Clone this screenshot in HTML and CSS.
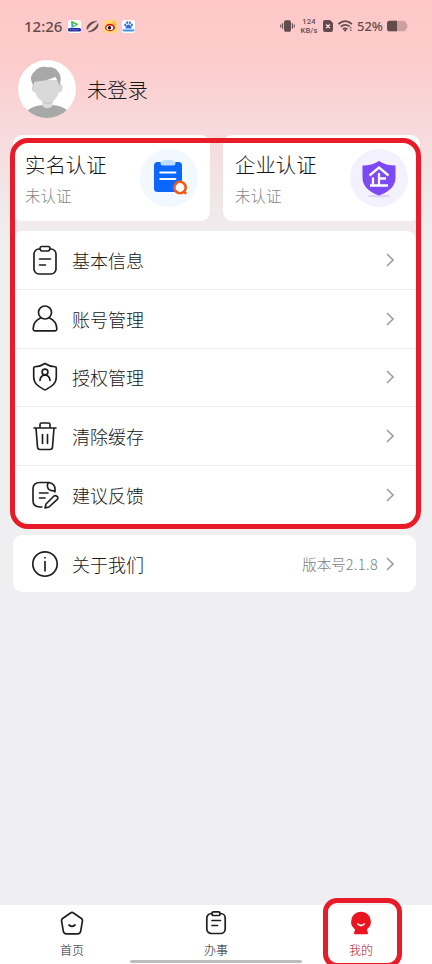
FILE: index.html
```html
<!DOCTYPE html>
<html lang="zh-CN">
<head>
<meta charset="utf-8">
<title>我的</title>
<link rel="stylesheet" href="styles.css">
</head>
<body>
<div class="screen">
  <header class="status">
    <span class="time">12:26</span>
    <svg class="app" viewBox="0 0 13 13"><rect width="13" height="13" rx="2" fill="#fff"/><path d="M3 1 10 4.500 3.500 8Z" fill="#1daee8"/><path d="M3.500.7 10.500 4.300 6 7Z" fill="#58c322"/><path d="M5.500 3.500 8 4.700 5.500 6Z" fill="#fff"/><rect x="0" y="8" width="13" height="3.600" rx="1.500" fill="#2130a5"/><path d="M2 9.800h9" stroke="#8290df" stroke-dasharray="1 .7"/></svg>
    <svg class="app" viewBox="0 0 13 13"><path d="M1.300 9.500C-.5 6 4.500.8 10.800 1.200 6.500 3 3.500 5.500 1.300 9.500ZM11.900 3.500c1.500 4-4 8.800-9.700 8.300C6.500 10.300 10 7.500 11.900 3.500Z" fill="#634b4d" stroke="#634b4d" stroke-width=".5" stroke-linejoin="round"/></svg>
    <svg class="app" viewBox="0 0 13 13"><rect width="13" height="13" rx="2.500" fill="#ffd775"/><ellipse cx="6" cy="7.500" rx="5" ry="3.700" fill="#d51c1c"/><ellipse cx="5.800" cy="7.700" rx="3.400" ry="2.300" fill="#fff"/><circle cx="5.500" cy="7.800" r="1.700" fill="#161010"/><path d="M8.500 2c2-.5 3.300 1 2.800 3M8.500 3.800c1-.2 1.500.4 1.300 1.300" fill="none" stroke="#f29a22"/></svg>
    <svg class="app" viewBox="0 0 13 13"><rect width="13" height="13" rx="2.500" fill="#fff"/><g fill="#316de8"><ellipse cx="3.200" cy="5" rx="1" ry="1.400"/><ellipse cx="5.200" cy="2.700" rx="1" ry="1.400"/><ellipse cx="7.800" cy="2.700" rx="1" ry="1.400"/><ellipse cx="9.800" cy="5" rx="1" ry="1.400"/><path d="M6.500 4.500c1.500 0 3.500 2.500 3 4h-6c-.5-1.500 1.500-4 3-4Z"/></g><path d="M0 9.500h13l-1.500 2h-10Z" fill="#3e92ec"/></svg>
    <span class="grow"></span>
    <svg class="vibrate" viewBox="0 0 16 14"><rect x="4.300" y=".8" width="7.400" height="12.400" rx="2" fill="#634b4d"/><path d="M2.800 4v6M.8 5.500v3M13.200 4v6M15.200 5.500v3" stroke="#634b4d" stroke-width="1.200"/></svg>
    <span class="rate"><b>124</b><b>KB/s</b></span>
    <svg class="sim" viewBox="0 0 10 12"><path d="M2 0h5l3 3v7q0 2-2 2H2q-2 0-2-2V2Q0 0 2 0Z" fill="#634b4d"/><path d="m3.200 4.500 3.600 3.600m0-3.600L3.200 8.100" stroke="#ffe4e4" stroke-width="1.300"/></svg>
    <svg class="wifi" viewBox="0 0 15 12"><g fill="none" stroke="#634b4d" stroke-width="1.700"><path d="M.4 4Q7 -1.700 14 4M2.700 6.700Q7 3.200 11.600 6.500M4.800 9.200Q7 7.400 9.400 9.200"/></g><path d="m5.300 9.600 1.800 2.300 1.800-2.300ZM11.500 8.200l1.200-1.500L14 8.200ZM11.500 9.700 12.700 11.200 14 9.700Z" fill="#634b4d"/></svg>
    <span class="percent">52%</span>
    <svg class="battery" viewBox="0 0 22 12"><rect width="20" height="11" y=".5" rx="3" fill="#cd9fa1"/><path d="M20 3q1.500.5 1.500 3T20 9Z" fill="#cd9fa1"/><path d="M3 .5h7.500v11H3q-3 0-3-3v-5q0-3 3-3Z" fill="#634b4d"/></svg>
  </header>

  <section class="profile">
    <svg class="avatar" viewBox="0 0 58 58"><defs><clipPath id="face"><circle cx="29" cy="29" r="29"/></clipPath></defs><circle cx="29" cy="29" r="29" fill="#fff"/><g clip-path="url(#face)"><path d="M9 51q5-5 15-6h11q10 1 15 6v8H9Z" fill="#a8a8a8"/><path d="M24.500 39h10v7q-5 4.500-10 0Z" fill="#dcdcdc"/><path d="M25 42.500q5 2 9.500-.3" fill="none" stroke="#bababa"/><ellipse cx="16.500" cy="28" rx="2.500" ry="4" fill="#d5d5d5"/><ellipse cx="42" cy="28" rx="2.500" ry="4" fill="#d5d5d5"/><path d="M16.500 20h25v9q-1 8-6.500 12-5.500 3-11.500 0-6-4-7-12Z" fill="#d9d9d9"/><path d="M15.500 25.500c-3-5-4-10 1.200-14C20 6.500 27 6 30 7.300c6-.8 9 2.200 9.500 4 4.500 4 3.300 10 2 14.500-1.500-4-2.500-7-4.500-9-6 4-14 4-20.300 5Z" fill="#a8a8a8"/></g></svg>
    <h1>未登录</h1>
  </section>

  <main>
    <section class="verify">
      <div class="card">
        <div><h2>实名认证</h2><p>未认证</p></div>
        <svg class="badge" viewBox="0 0 58 58"><circle cx="29" cy="29" r="29" fill="#f1f8ff"/><rect x="14" y="13" width="28" height="30" rx="3.500" fill="#0c66fb"/><path d="M24 11h8q1 0 1.500 1.500h2V14q0 2.500-2.500 2.500H23q-2.500 0-2.500-2.500v-1.500h2Q23 11 24 11Z" fill="#bfdcff"/><path d="M20.300 23.500h15M20.300 30h15" stroke="#fff" stroke-width="2.200" stroke-linecap="round"/><circle cx="40" cy="38.500" r="5.700" fill="#fff" stroke="#f05b16" stroke-width="2.600"/><path d="m43.500 42.500 2.800 2.300" fill="none" stroke="#f05b16" stroke-width="2.500"/></svg>
      </div>
      <div class="card">
        <div><h2>企业认证</h2><p>未认证</p></div>
        <svg class="badge" viewBox="0 0 58 58"><circle cx="29" cy="29" r="29" fill="#f4f1fe"/><ellipse cx="29" cy="47" rx="11.500" ry="1.300" fill="#ded4fc"/><path d="M29 12q7 4.500 16.500 4.500V29c0 9-8 14.500-16.500 17.500C20.500 43.500 12.500 38 12.500 29V16.500Q22 16.500 29 12Z" fill="#7d49f4"/><path d="M19.500 26.500 29 18.500l9.500 8M29 24v12M29 29.500h7M23 28.500V36M20 36.500h18" fill="none" stroke="#fff" stroke-width="2.300"/></svg>
      </div>
    </section>

    <section class="list">
      <div class="row"><svg class="icon" viewBox="0 0 28 30"><rect x="3" y="4" width="22" height="25" rx="5"/><path class="cover" d="M11 1.500h6q2 0 2 2t-2 2.500h-6q-2-.5-2-2.500t2-2Z"/><path d="M8.500 14h11M8.500 20h6"/></svg><span class="label">基本信息</span><svg class="chevron" viewBox="0 0 8 14"><path d="m1 1 6 6-6 6"/></svg></div>
      <div class="row"><svg class="icon" viewBox="0 0 28 30"><circle cx="14" cy="8.500" r="6.500"/><path d="M9.500 14C5 16 2.400 20 2.200 24.500q-.1 2.300 2 2.300h19.600q2.100 0 2-2.300C25.600 20 23 16 18.500 14"/></svg><span class="label">账号管理</span><svg class="chevron" viewBox="0 0 8 14"><path d="m1 1 6 6-6 6"/></svg></div>
      <div class="row"><svg class="icon" viewBox="0 0 28 30"><path d="M14 1.500Q18 4.300 24 4.700q1.300.1 1.300 1.300v9c0 7-5 9.500-10.300 12.500q-1 .5-2 0C7.700 24.500 2.700 22 2.700 15V6q0-1.200 1.300-1.300Q10 4.300 14 1.500Z"/><circle cx="14" cy="10" r="2.900"/><path d="M9 18.500q.3-5 5-5.600 4.700.6 5 5.600"/></svg><span class="label">授权管理</span><svg class="chevron" viewBox="0 0 8 14"><path d="m1 1 6 6-6 6"/></svg></div>
      <div class="row"><svg class="icon" viewBox="0 0 28 30"><path d="M3 7h22M9 7V3.500Q9 2 10.500 2h7Q19 2 19 3.500V7M5 7l1.500 19q.2 2.500 2.500 2.500h10q2.300 0 2.500-2.500L23 7M11.500 13.500v9M16.500 13.500v9"/></svg><span class="label">清除缓存</span><svg class="chevron" viewBox="0 0 8 14"><path d="m1 1 6 6-6 6"/></svg></div>
      <div class="row"><svg class="icon" viewBox="0 0 28 30"><path d="M11 27H9q-7 0-7-6.500V9Q2 2.500 9 2.500h9q6 1 6 7v2.500M17.500 2.500q-1.500 2-1 4 .5 4.500 6.800 4.300M8.500 13H17M8.500 18H14M14 28l1-4 8-8q1.500-1 3 .3t.3 3l-8.300 7.700Z"/></svg><span class="label">建议反馈</span><svg class="chevron" viewBox="0 0 8 14"><path d="m1 1 6 6-6 6"/></svg></div>
    </section>

    <section class="list about">
      <div class="row"><svg class="icon" viewBox="0 0 28 30"><circle cx="14" cy="15" r="12.200"/><path d="M14 12.500v9.500M14 8.500v.5"/></svg><span class="label">关于我们</span><span class="version">版本号<span class="num">2.1.8</span></span><svg class="chevron" viewBox="0 0 8 14"><path d="m1 1 6 6-6 6"/></svg></div>
    </section>
  </main>

  <nav>
    <div class="tab"><svg viewBox="0 0 24 24"><path d="M10.500 2q1.500-1.100 3 0l7.600 5.200q1.600 1.100 1.300 2.900l-1.700 10q-.5 2.700-3.200 2.700H6.500q-2.700 0-3.200-2.700l-1.700-10q-.3-1.800 1.300-2.900ZM9 14q3 2.600 6 0"/></svg><span>首页</span></div>
    <div class="tab"><svg viewBox="0 0 24 24"><rect x="2.800" y="2.500" width="18.400" height="20" rx="4.500"/><path class="cover" d="M9.500.9h5q1.500 0 1.500 1.800t-1.500 1.800h-5Q8 4.500 8 2.700T9.500.9Z"/><path d="M8 9.500h8.500M8 14.500h5.500"/></svg><span>办事</span></div>
    <div class="tab active"><svg viewBox="0 0 24 24"><path class="solid" d="M12 .8a9.800 9.800 0 0 1 5.900 17.600l1.100 3.700q.3 1.100-1 1.100H6q-1.300 0-1-1.100l1.100-3.700A9.800 9.800 0 0 1 12 .8Z"/><path class="smile" d="M8.800 13q3.200 3 6.400 0"/></svg><span>我的</span></div>
  </nav>
  <div class="home-bar"></div>
  <div class="mark mark-main"></div>
  <div class="mark mark-tab"></div>
</div>
</body>
</html>
```
FILE: styles.css
```css
* { box-sizing: border-box; margin: 0; padding: 0; }
body { font-family: "Noto Sans CJK SC", "Noto Sans", sans-serif; background: #efeff1; color: #161618; }
svg { display: block; flex: none; }
.screen { position: relative; width: 432px; height: 964px; overflow: hidden; display: flex; flex-direction: column; background: linear-gradient(#fec8c8 0, #fdcbcb 60px, #f7dadb 130px, #f1e6e8 195px, #efeff1 250px); }
.status { height: 52px; padding: 0 24px; display: flex; align-items: center; color: #634b4d; font-family: "Noto Sans", sans-serif; }
.time { width: 38px; margin-right: 6px; font: 500 15px/20px "Noto Sans", sans-serif; white-space: nowrap; }
.app { width: 13px; height: 13px; margin-right: 5px; }
.grow { flex: 1; }
.vibrate { width: 15px; height: 14px; margin-right: 5px; }
.rate { width: 18px; display: flex; flex-direction: column; align-items: center; margin-right: 5px; }
.rate b { font: 500 7.5px/9px Roboto, sans-serif; white-space: nowrap; letter-spacing: .2px; }
.sim { width: 10px; height: 12px; margin-right: 5px; }
.wifi { width: 15px; height: 12px; margin-right: 4px; }
.percent { width: 26px; font-size: 13px; font-weight: 500; margin-right: 4px; white-space: nowrap; }
.battery { width: 21px; height: 12px; }
.profile { height: 83px; padding: 8px 18px 0; display: flex; gap: 11px; }
.avatar { width: 58px; height: 58px; }
h1 { font-size: 20.3px; line-height: 58px; font-weight: 300; }
main { flex: 1; padding-left: 13px; }
.verify { display: grid; grid-template-columns: 197px 197px; gap: 13px; margin-bottom: 10px; }
.card { height: 86px; padding: 14px 12px; display: flex; justify-content: space-between; border-radius: 9px; background: #fff; }
h2 { font-size: 20.4px; line-height: 30px; font-weight: 300; }
.card p { font-size: 15.5px; line-height: 22px; margin-top: 5px; color: #858585; font-weight: 300; }
.badge { width: 58px; height: 58px; }
.list { width: 403px; background: #fff; border-radius: 9px; }
.row { height: 58.75px; display: flex; align-items: center; padding: 0 22px 0 18px; }
.list .row:not(:last-child) { border-bottom: 1px solid #ececee; }
.icon { width: 28px; height: 30px; margin-right: 13px; fill: none; stroke: #1e1e20; stroke-width: 1.65; stroke-linecap: round; stroke-linejoin: round; }
.cover { fill: #fff; }
.label { flex: 1; font-size: 18px; font-weight: 300; line-height: 28px; }
.chevron { width: 8px; height: 14px; fill: none; stroke: #a0a0a2; stroke-width: 1.6; }
.about { margin-top: 10px; }
.about .row { height: 57.5px; }
.version { margin-right: 8px; font-size: 14.5px; font-weight: 300; color: #7c7c80; }
.num { letter-spacing: .35px; }
nav { height: 59px; flex: none; display: grid; grid-template-columns: repeat(3, 1fr); background: #fff; }
.tab { display: flex; flex-direction: column; align-items: center; padding-top: 6px; font-size: 12px; line-height: 18px; font-weight: 300; }
.tab svg { width: 24px; height: 24px; margin-bottom: 6px; fill: none; stroke: #1e1e20; stroke-width: 1.7; stroke-linecap: round; stroke-linejoin: round; }
.tab .cover { fill: #fff; }
.tab .solid { fill: #e91620; stroke: none; }
.tab .smile { stroke: #fff; }
.tab.active { color: #b0101a; padding-left: 2px; }
.home-bar { position: absolute; left: 130px; top: 960px; width: 172px; height: 3px; border-radius: 2px; background: #bdbdbd; }
.mark { position: absolute; border: 5px solid #e81c28; }
.mark-main { left: 10px; top: 138px; width: 411px; height: 391px; border-radius: 18px; }
.mark-tab { left: 323px; top: 898px; width: 79px; height: 70px; border-radius: 14px; }
```
